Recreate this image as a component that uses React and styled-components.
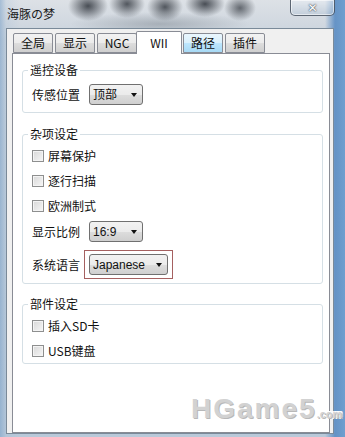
import styled, { createGlobalStyle } from 'styled-components';

const Global = createGlobalStyle`
  html, body { margin: 0; padding: 0; background: #fff; }
  body { font-family: "Liberation Sans", "Noto Sans CJK SC", sans-serif; }
`

const Window = styled.div`
  position: relative;
  width: 345px;
  height: 437px;
  overflow: hidden;
  display: flex;
  flex-direction: column;
  background:
    linear-gradient(to right, rgba(120,160,200,0.55) 0px, rgba(150,180,210,0.2) 6px, transparent 20px, transparent 325px, rgba(90,140,195,0.9) 335px, #6f9fcf 345px),
    linear-gradient(#dde1e6, #c8d2dc 40px, #b9c9d9);
`

const TitleBar = styled.div`
  height: 28px;
  flex: none;
  display: flex;
  justify-content: space-between;
  align-items: flex-start;
  padding-left: 7px;
  background:
    radial-gradient(ellipse 20px 15px at 88px 6px, rgba(35,40,48,0.8), transparent),
    radial-gradient(ellipse 18px 14px at 127px 4px, rgba(35,40,48,0.75), transparent),
    radial-gradient(ellipse 18px 14px at 165px 7px, rgba(35,40,48,0.75), transparent),
    radial-gradient(ellipse 20px 13px at 205px 4px, rgba(35,40,48,0.8), transparent),
    radial-gradient(ellipse 16px 13px at 240px 8px, rgba(35,40,48,0.65), transparent),
    radial-gradient(ellipse 90px 12px at 160px 24px, rgba(90,100,110,0.35), transparent);
`

const Title = styled.div`
  margin-top: 6px;
  font: 12px/16px "Noto Sans CJK SC", sans-serif;
  color: #1a1a1a;
`

const CloseButton = styled.div`
  width: 45px;
  height: 16px;
  margin-right: 10px;
  box-sizing: border-box;
  border: 1px solid rgba(50,60,75,0.75);
  border-top: none;
  border-radius: 0 0 5px 5px;
  box-shadow: inset 0 0 0 1px rgba(255,255,255,0.55);
  background: linear-gradient(rgba(235,240,246,0.55), rgba(170,190,210,0.45));
  display: flex;
  align-items: center;
  justify-content: center;
  color: #fff;
  font: bold 12px/1 "DejaVu Sans", sans-serif;
  text-shadow: 0 0 2px #3a4450, 0 0 1px #3a4450;
`

const Body = styled.div`
  flex: 1;
  display: flex;
  padding: 0 11px 3px 6px;
`

const Client = styled.div`
  flex: 1;
  display: flex;
  flex-direction: column;
  background: #f0f0f0;
  border: 1px solid #7a8a99;
  padding: 2px 3px 0 5px;
`

const TabStrip = styled.div`
  height: 22px;
  display: flex;
  align-items: flex-end;
  padding-left: 1px;
  position: relative;
  z-index: 1;
`

const Tab = styled.div`
  box-sizing: border-box;
  width: ${p => (p.$active ? 46 : 40)}px;
  height: ${p => (p.$active ? 23 : 20)}px;
  margin: ${p => (p.$active ? '0 -1px -1px -1px' : '0 0 0 2px')};
  border: 1px solid #898c95;
  border-bottom: ${p => (p.$active ? 'none' : '1px solid #898c95')};
  border-radius: 2px 2px 0 0;
  background: ${p =>
    p.$active
      ? '#fff'
      : p.$hover
      ? 'linear-gradient(#eaf6fd 0%, #d9f0fc 50%, #bee6fd 51%, #a7d9f5 100%)'
      : 'linear-gradient(#f2f2f2 0%, #ebebeb 50%, #dddddd 51%, #cfcfcf 100%)'};
  display: flex;
  justify-content: center;
  align-items: ${p => (p.$active ? 'flex-start' : 'center')};
  padding-top: ${p => (p.$active ? '3px' : '0')};
  font: 12px/16px "Noto Sans CJK SC", sans-serif;
  color: #111;
  &:first-child { margin-left: 0; }
`

const Panel = styled.div`
  flex: 1;
  background: #fff;
  border: 1px solid #898c95;
  padding: 0 6px 0 9px;
`

const Group = styled.fieldset`
  margin: ${p => p.$top}px 0 0 0;
  padding: ${p => p.$pad};
  border: 1px solid #d5dfe5;
  border-radius: 3px;
  min-width: 0;
`

const Legend = styled.legend`
  margin-left: -4px;
  padding: 0 2px;
  font: 12px/16px "Noto Sans CJK SC", sans-serif;
  color: #111;
`

const Row = styled.div`
  display: flex;
  align-items: center;
  height: ${p => p.$h || 25}px;
  margin-top: ${p => p.$mt || 0}px;
  font: 12px/16px "Noto Sans CJK SC", sans-serif;
  color: #111;
`

const Box = styled.span`
  box-sizing: border-box;
  width: 12px;
  height: 12px;
  margin-right: 4px;
  border: 1px solid #8e8f8f;
  background: linear-gradient(135deg, #d8d8d8, #f6f6f6);
  box-shadow: inset 0 0 0 1px #f4f4f4;
`

const Label = styled.span`
  width: 57px;
  flex: none;
`

const Select = styled.div`
  box-sizing: border-box;
  width: ${p => p.$w}px;
  height: 21px;
  border: 1px solid #707070;
  border-radius: 3px;
  background: linear-gradient(#f2f2f2 0%, #ebebeb 50%, #dddddd 51%, #cfcfcf 100%);
  display: flex;
  align-items: center;
  justify-content: space-between;
  padding: 0 5px 0 3px;
  font: 12px/16px "Liberation Sans", "Noto Sans CJK SC", sans-serif;
  color: #111;
`

const Arrow = styled.span`
  width: 0;
  height: 0;
  border-left: 3.5px solid transparent;
  border-right: 3.5px solid transparent;
  border-top: 4px solid #111;
`

const Highlight = styled.div`
  margin-left: -5px;
  padding: 3px 4px;
  border: 1px solid #a56060;
`

const Watermark = styled.div`
  position: absolute;
  left: 191px;
  top: 393px;
  display: flex;
  align-items: baseline;
  color: #d2d2d2;
  font: bold 28px/32px "Liberation Sans", sans-serif;
  letter-spacing: 2px;
  text-shadow: 1px 1px 0 #b8b8b8, -1px -1px 0 #fff, 1px -1px 0 #fff, -1px 1px 0 #fff;
  & small {
    font-size: 11px;
    letter-spacing: 0;
  }
`

function Check({ children }) {
  return (
    <Row>
      <Box />
      {children}
    </Row>
  )
}

function Combo({ w, children }) {
  return (
    <Select $w={w}>
      <span>{children}</span>
      <Arrow />
    </Select>
  )
}

export default function App() {
  return (
    <Window>
      <Global />
      <TitleBar>
        <Title>海豚の梦</Title>
        <CloseButton>✕</CloseButton>
      </TitleBar>
      <Body>
        <Client>
          <TabStrip>
            <Tab>全局</Tab>
            <Tab>显示</Tab>
            <Tab>NGC</Tab>
            <Tab $active>WII</Tab>
            <Tab $hover>路径</Tab>
            <Tab>插件</Tab>
          </TabStrip>
          <Panel>
            <Group $top={8} $pad="6px 8px 7px 9px">
              <Legend>遥控设备</Legend>
              <Row $h={21}>
                <Label>传感位置</Label>
                <Combo w={54}>顶部</Combo>
              </Row>
            </Group>
            <Group $top={13} $pad="1px 8px 4px 9px">
              <Legend>杂项设定</Legend>
              <Check>屏幕保护</Check>
              <Check>逐行扫描</Check>
              <Check>欧洲制式</Check>
              <Row $h={21} $mt={3}>
                <Label>显示比例</Label>
                <Combo w={54}>16:9</Combo>
              </Row>
              <Row $h={29} $mt={8}>
                <Label>系统语言</Label>
                <Highlight>
                  <Combo w={79}>Japanese</Combo>
                </Highlight>
              </Row>
            </Group>
            <Group $top={12} $pad="1px 8px 0 9px">
              <Legend>部件设定</Legend>
              <Check>插入SD卡</Check>
              <Check>USB键盘</Check>
            </Group>
          </Panel>
        </Client>
      </Body>
      <Watermark>
        HGame5<small>.com</small>
      </Watermark>
    </Window>
  )
}
